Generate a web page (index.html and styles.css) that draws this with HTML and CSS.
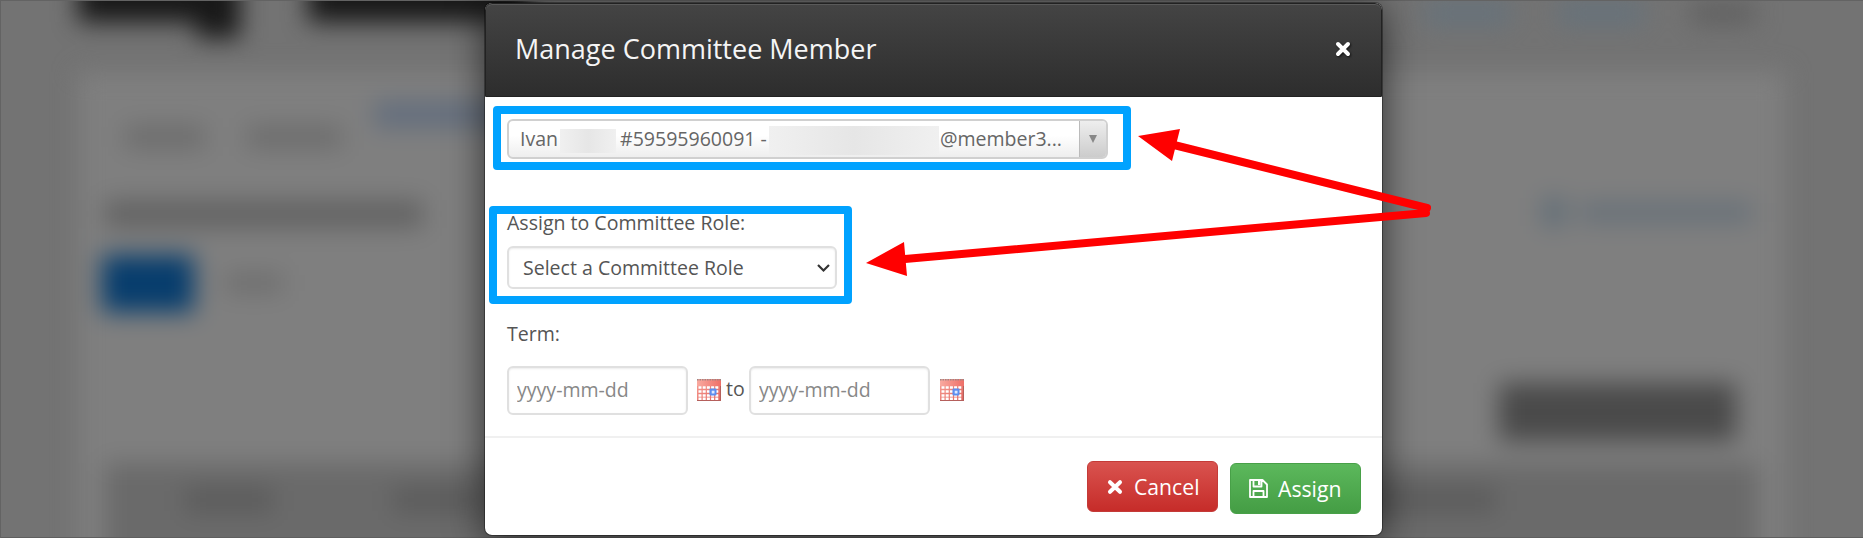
FILE: index.html
```
<!DOCTYPE html>
<html lang="en">

<head>
    <meta charset="UTF-8">
    <meta name="viewport" content="width=device-width, initial-scale=1.0">
    <title>Manage Committee Member</title>
    <link rel="stylesheet" href="styles.css">
</head>

<body>
    <!-- blurred page behind the dialog -->
    <div class="backdrop">
        <div class="page">
            <div class="topbar">
                <div class="logo"></div>
                <div class="logo-tail"></div>
                <div class="logo logo-wide"></div>
                <div class="nav">
                    <span class="nav-item"></span>
                    <span class="nav-item"></span>
                    <span class="nav-item dark"></span>
                </div>
            </div>
            <div class="card">
                <div class="tabs">
                    <span class="tab"></span>
                    <span class="tab wide"></span>
                    <span class="tab active"></span>
                </div>
                <div class="heading-row">
                    <span class="heading"></span>
                    <span class="add-link"><i></i><b></b></span>
                </div>
                <div class="pills">
                    <span class="pill"></span>
                    <span class="pill-text"></span>
                </div>
                <div class="tools"><span class="tool-btn"></span></div>
                <div class="table-head">
                    <span></span>
                    <span></span>
                    <span class="last"></span>
                </div>
            </div>
        </div>
    </div>
    <div class="edge"></div>

    <div class="modal">
        <div class="modal-header">
            <h3>Manage Committee Member</h3>
            <svg class="close" width="16" height="16" viewBox="0 0 16 16">
                <path d="M3 3l10 10M13 3L3 13" />
            </svg>
        </div>
        <div class="modal-body">
            <div class="combo">
                <div class="combo-text">
                    <span>Ivan</span>
                    <span class="masked name"></span>
                    <span>#59595960091 -</span>
                    <span class="masked mail"></span>
                    <span>@member3...</span>
                </div>
                <div class="combo-arrow"><i></i></div>
            </div>

            <div class="label role-label">Assign to Committee Role:</div>
            <div class="select">
                <span>Select a Committee Role</span>
                <svg width="15" height="10" viewBox="0 0 15 10">
                    <path d="M2 2l5.5 5.5L13 2" />
                </svg>
            </div>

            <div class="label term-label">Term:</div>
            <div class="dates">
                <input class="date" type="text" placeholder="yyyy-mm-dd">
                <svg class="cal" width="24" height="22" viewBox="0 0 24 22">
                    <use href="#calendar" />
                </svg>
                <span class="to">to</span>
                <input class="date" type="text" placeholder="yyyy-mm-dd">
                <svg class="cal last" width="24" height="22" viewBox="0 0 24 22">
                    <use href="#calendar" />
                </svg>
            </div>
        </div>
        <div class="modal-footer">
            <div class="btn btn-danger">
                <svg width="16" height="16" viewBox="0 0 16 16">
                    <path class="cross" d="M3 3.2l10 9.6M13 3.2L3 12.8" />
                </svg>
                <span>Cancel</span>
            </div>
            <div class="btn btn-success">
                <svg width="19" height="19" viewBox="0 0 19 19">
                    <path class="disk" d="M1 1h12.5L18 5.500V18H1zM4.500 1v6.500h8V1M4.500 18v-6h10v6" />
                    <path class="disk-fill" d="M9 2h2.500v4H9z" />
                </svg>
                <span>Assign</span>
            </div>
        </div>
    </div>

    <!-- callouts -->
    <div class="mark mark-member"></div>
    <div class="mark mark-role"></div>
    <svg class="arrows" width="1863" height="538" viewBox="0 0 1863 538">
        <path class="line" d="M1174 145L1427 208M905 259L1426 213" />
        <path class="head" d="M1138 136L1180 129L1172 161zM866 263L904 242L907 276z" />
    </svg>

    <svg class="defs" width="0" height="0">
        <defs>
            <linearGradient id="calTop" x1="0" y1="0" x2="1" y2="0">
                <stop offset="0" stop-color="#f9aaa0" />
                <stop offset="1" stop-color="#ee6f68" />
            </linearGradient>
            <linearGradient id="calBody" x1="0" y1="0" x2="1" y2="1">
                <stop offset="0" stop-color="#f8a096" />
                <stop offset="1" stop-color="#e0645e" />
            </linearGradient>
            <symbol id="calendar" viewBox="0 0 24 22">
                <rect width="24" height="22" fill="url(#calBody)" />
                <rect width="24" height="7" fill="url(#calTop)" />
                <path d="M0 .7h24" stroke="#a08583" stroke-width="1.400" stroke-dasharray="1.500 1" />
                <path d="M1.500 8.500h20M1.500 12.500h20M1.500 16.500h20M1.500 19.800h20" stroke="#fff" stroke-width="2.700" stroke-dasharray="3 1.200" />
                <rect x="12.500" y="9.500" width="7" height="7" rx="1" fill="#5b8def" />
                <rect x="14.700" y="11.700" width="2.800" height="2.800" fill="#dce9ff" />
                <path d="M0 21.500h24M23.500 7v15" stroke="#b5605c" />
            </symbol>
        </defs>
    </svg>
</body>

</html>
```
FILE: styles.css
```
html,
body {
    margin: 0;
    padding: 0;
}

body {
    position: relative;
    width: 1863px;
    height: 538px;
    overflow: hidden;
    background: #737373;
    font-family: "Open Sans", "Noto Sans", sans-serif;
    font-size: 19.550px;
    color: #555;
}

/* page behind */
.backdrop {
    height: 538px;
    overflow: hidden;
}

.page {
    box-sizing: border-box;
    height: 640px;
    margin-top: -40px;
    padding: 0 78px;
    filter: blur(12px);
}

.topbar {
    display: flex;
    align-items: flex-start;
    height: 112px;
}

.logo {
    width: 118px;
    height: 62px;
    background: #181818;
}

.logo-tail {
    width: 44px;
    height: 78px;
    background: #181818;
}

.logo-wide {
    width: 220px;
    margin-left: 68px;
}

.nav {
    display: flex;
    flex: 1;
    justify-content: flex-end;
    padding: 42px 30px 0 0;
}

.nav-item {
    width: 86px;
    height: 22px;
    margin-left: 47px;
    background: #65727c;
}

.nav-item.dark {
    width: 64px;
    background: #606060;
}

.card {
    box-sizing: border-box;
    height: 560px;
    padding: 34px 27px 0;
    background: #7f7f7f;
}

.tabs {
    display: flex;
    align-items: center;
    height: 62px;
    padding-left: 20px;
}

.tab {
    width: 80px;
    height: 22px;
    margin-right: 42px;
    background: #6c6c6c;
}

.tab.wide {
    width: 95px;
    margin-right: 32px;
}

.tab.active {
    width: 140px;
    height: 25px;
    margin-top: -45px;
    background: #626d7d;
}

.heading-row {
    display: flex;
    align-items: center;
    justify-content: space-between;
    height: 92px;
}

.heading {
    width: 318px;
    height: 28px;
    background: #636363;
}

.add-link {
    display: flex;
    align-items: center;
    margin: -4px 6px 0 0;
}

.add-link i {
    width: 24px;
    height: 28px;
    margin-right: 14px;
    background: #616e78;
}

.add-link b {
    width: 172px;
    height: 21px;
    background: #687179;
}

.pills {
    display: flex;
    align-items: center;
    height: 54px;
    margin: -4px 0 0 -3px;
}

.pill {
    width: 92px;
    height: 57px;
    background: #073d6d;
}

.pill-text {
    width: 58px;
    height: 20px;
    margin-left: 31px;
    background: #6e6e6e;
}

.tools {
    display: flex;
    justify-content: flex-end;
    height: 80px;
    padding: 73px 22px 0 0;
}

.tool-btn {
    width: 237px;
    height: 58px;
    background: #4a4a4a;
}

.table-head {
    display: flex;
    height: 180px;
    background: #6a6a6a;
}

.table-head span {
    width: 88px;
    height: 24px;
    margin: 25px 0 0 80px;
    background: #5b5b5b;
}

.table-head span + span {
    margin-left: 120px;
}

.table-head span.last {
    width: 130px;
    margin-left: 885px;
}

.edge {
    position: absolute;
    inset: 0;
    box-shadow: inset 1px 1px 0 #636363, inset 0 -1px 0 #5f5f5f;
}

/* dialog */
.modal {
    position: absolute;
    top: 2px;
    left: 484px;
    box-sizing: border-box;
    width: 899px;
    height: 534px;
    border: 1px solid rgba(0, 0, 0, .35);
    border-radius: 8px;
    background: #fff;
    background-clip: padding-box;
    box-shadow: 0 4px 36px rgba(0, 0, 0, .6);
}

.modal-header {
    display: flex;
    align-items: center;
    justify-content: space-between;
    box-sizing: border-box;
    height: 94px;
    padding: 0 30px 3px 29px;
    border: 1px solid #222;
    border-radius: 7px 7px 0 0;
    background: linear-gradient(#444, #2d2d2d);
    box-shadow: inset 0 1px 0 #5a5a5a;
}

.modal-header h3 {
    margin: 0;
    font-size: 27px;
    font-weight: 400;
    line-height: 40px;
    color: #f5f5f5;
}

.close {
    filter: drop-shadow(1px 1px 1px #111);
}

.close path,
.cross {
    fill: none;
    stroke: #fff;
    stroke-width: 4;
    stroke-linecap: round;
}

.modal-body {
    box-sizing: border-box;
    height: 339px;
    padding: 22px 22px 0;
    line-height: 28px;
}

.combo {
    display: flex;
    box-sizing: border-box;
    width: 601px;
    height: 40px;
    border: 2px solid #d0d0d0;
    border-radius: 6px;
    background: linear-gradient(#fff 40%, #eee);
    color: #666;
    overflow: hidden;
}

.combo-text {
    display: flex;
    flex: 1;
    align-items: center;
    padding-left: 11px;
    white-space: nowrap;
}

.masked {
    background: linear-gradient(90deg, #f0f0f0, #e6e6e6, #f0f0f0);
}

.masked.name {
    width: 56px;
    height: 24px;
    margin: 4px 4px 0 2px;
}

.masked.mail {
    width: 170px;
    height: 29px;
    margin: 2px 1px 0 2px;
}

.combo-arrow {
    display: flex;
    align-items: center;
    justify-content: center;
    width: 26px;
    border-left: 1px solid #bbb;
    background: linear-gradient(#eee, #ccc);
}

.combo-arrow i {
    border: 4.500px solid transparent;
    border-top: 8px solid #888;
    border-bottom: 0;
}

.label {
    height: 28px;
}

.role-label {
    margin-top: 50px;
}

.select {
    display: flex;
    align-items: center;
    justify-content: space-between;
    box-sizing: border-box;
    width: 330px;
    height: 43px;
    margin-top: 9px;
    padding: 0 4px 0 14px;
    border: 2px solid #e0e0e0;
    border-radius: 6px;
    box-shadow: inset 0 1px 2px rgba(0, 0, 0, .08);
}

.select path {
    fill: none;
    stroke: #333;
    stroke-width: 2.200;
}

.term-label {
    margin-top: 31px;
}

.dates {
    display: flex;
    align-items: center;
    height: 49px;
    margin-top: 18px;
}

.date {
    box-sizing: border-box;
    width: 181px;
    height: 49px;
    margin: 0;
    padding: 0 8px 2px;
    border: 2px solid #e0e0e0;
    border-radius: 6px;
    background: #fff;
    box-shadow: inset 0 1px 2px rgba(0, 0, 0, .08);
    font: inherit;
}

.date::placeholder {
    color: #888;
}

.cal {
    width: 24px;
    height: 22px;
    margin: -1px 0 0 9px;
}

.cal.last {
    margin-left: 10px;
}

.to {
    width: 23px;
    margin: -3px 0 0 5px;
}

.modal-footer {
    display: flex;
    justify-content: flex-end;
    padding: 23px 21px 0 0;
    border-top: 2px solid #f0f0f0;
}

.btn {
    display: flex;
    align-items: center;
    box-sizing: border-box;
    width: 131px;
    height: 51px;
    border-radius: 6px;
    font-size: 21.200px;
    color: #fff;
}

.btn-danger {
    padding-left: 19px;
    border: 1px solid #c43b38;
    background: linear-gradient(#d9534f, #c62c29);
}

.btn-danger span {
    margin: -1px 0 0 11px;
}

.btn-success {
    margin: 2px 0 0 12px;
    padding-left: 18px;
    border: 1px solid #48a048;
    background: linear-gradient(#5cb85c, #449d44);
}

.btn-success span {
    margin-left: 10px;
}

.disk {
    fill: none;
    stroke: #fff;
    stroke-width: 1.800;
    stroke-linejoin: round;
}

.disk-fill {
    fill: #fff;
}

/* callouts */
.mark {
    position: absolute;
    box-sizing: border-box;
    border: 8px solid #00a2ff;
    border-radius: 4px;
}

.mark-member {
    top: 106px;
    left: 493px;
    width: 638px;
    height: 64px;
}

.mark-role {
    top: 206px;
    left: 489px;
    width: 363px;
    height: 98px;
}

.arrows {
    position: absolute;
    top: 0;
    left: 0;
}

.arrows .line {
    fill: none;
    stroke: #f00;
    stroke-width: 8;
    stroke-linecap: round;
}

.arrows .head {
    fill: #f00;
}

.defs {
    position: absolute;
    top: 0;
    left: 0;
}
```
